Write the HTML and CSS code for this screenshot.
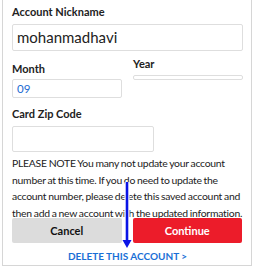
FILE: index.html
```html
<!DOCTYPE html>
<html>
<head>
<meta charset="utf-8">
<link rel="stylesheet" href="styles.css">
</head>
<body>
<div class="frame">
  <div class="field">
    <div class="label">Account Nickname</div>
    <div class="input big">mohanmadhavi</div>
  </div>
  <div class="row">
    <div class="col">
      <div class="label month">Month</div>
      <div class="input small"><span class="blue">09</span></div>
    </div>
    <div class="col">
      <div class="label year">Year</div>
      <div class="input thin"></div>
    </div>
  </div>
  <div class="field zipfield">
    <div class="label">Card Zip Code</div>
    <div class="input zip"></div>
  </div>
  <p class="note">PLEASE NOTE You many not update your account number at this time. If you do need to update the account number, please delete this saved account and then add a new account with the updated information.</p>
  <div class="buttons">
    <div class="btn cancel">Cancel</div>
    <div class="btn cont">Continue</div>
  </div>
  <div class="delete">DELETE THIS ACCOUNT &gt;</div>
</div>
<svg class="arrow" width="12" height="66" viewBox="0 0 12 66">
  <line x1="6" y1="0" x2="6" y2="60" stroke="#fff" stroke-width="5"/>
  <line x1="6" y1="0" x2="6" y2="60" stroke="#0a14e6" stroke-width="2.6"/>
  <polygon points="1.5,58 10.5,58 6,66" fill="#0a14e6"/>
</svg>
</body>
</html>
```
FILE: styles.css
```css
html, body { margin: 0; padding: 0; background: #fff; }
body { width: 256px; height: 270px; overflow: hidden; position: relative;
  font-family: Lato, "Noto Sans", sans-serif; color: #222; }
.frame { margin: -2px 4px 0 2px; border: 1px solid #d6d6d6; border-top: none;
  height: 268px; box-sizing: border-box; padding: 0 8px 0 9px; }
.label { font-size: 11px; font-weight: 700; line-height: 14px; }
.field { padding-top: 7px; }
.input { border: 1px solid #dedede; border-radius: 2px; box-sizing: border-box; }
.big { height: 27px; margin-top: 5px; font-size: 15px; line-height: 25px; padding-left: 4px; }
.row { display: flex; gap: 11px; margin-top: 6px; }
.col { flex: 1; }
.month { margin-top: 5px; }
.small { height: 19px; margin-top: 3px; font-size: 11.5px; line-height: 17px; padding-left: 4px; }
.blue { color: #1b6bd2; }
.thin { height: 5px; margin-top: 4px; }
.zipfield { padding-top: 9px; }
.zip { width: 142px; height: 26px; margin-top: 5px; }
.note { margin: 3px 0 0; font-size: 10.4px; line-height: 16.5px; color: #222; letter-spacing: -0.25px; word-spacing: -0.5px; }
.buttons { display: flex; gap: 11px; margin-top: -3px; margin-right: 1px; }
.btn { flex: 1; height: 25px; line-height: 25px; text-align: center; font-size: 11px; font-weight: 700; border-radius: 2px; }
.cancel { background: #dcdcdc; color: #111; }
.cont { background: #ec1c2a; color: #fff; }
.delete { text-align: center; color: #1a6fd6; font-size: 10px; font-weight: 700; margin-top: 7px; }
.arrow { position: absolute; left: 121px; top: 182px; }
```
